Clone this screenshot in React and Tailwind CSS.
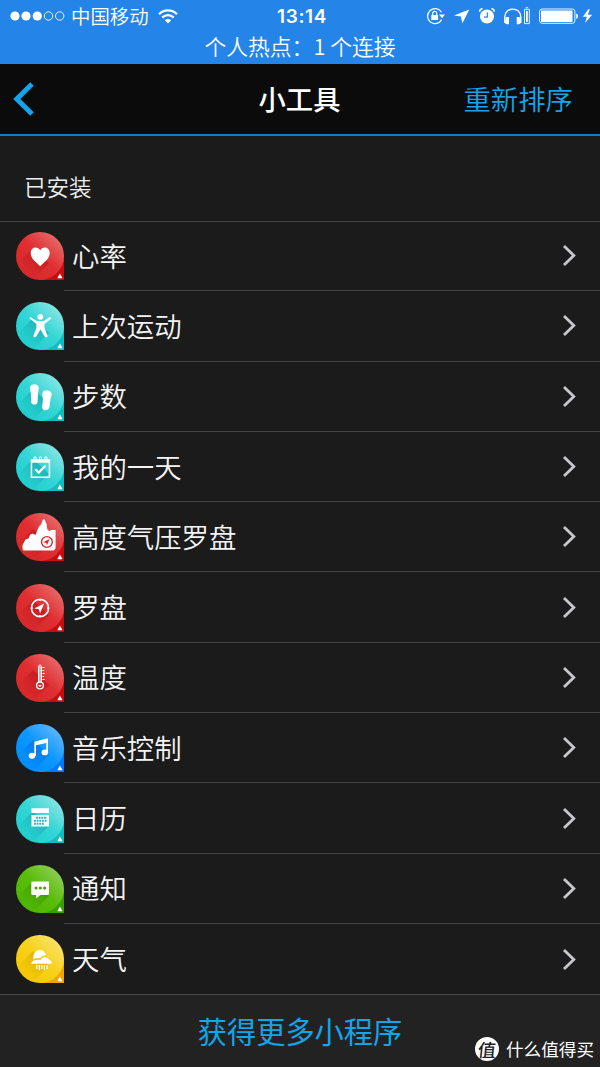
import React from "react";

const TONES = {
  red: { from: "#d9292b", mid: "#df2f31", to: "#e86667", corner: "#c80d12", shade: "#b00f14" },
  teal: { from: "#22d0d0", mid: "#35d6d6", to: "#84e4e2", corner: "#12bdbd", shade: "#0a9a9f" },
  blue: { from: "#0090ff", mid: "#0e97ff", to: "#5ab4ff", corner: "#0078ff", shade: "#0062d6" },
  green: { from: "#4fb800", mid: "#5bbd0c", to: "#8bcd52", corner: "#3aa000", shade: "#2f8500" },
  yellow: { from: "#f5cb00", mid: "#f6d21c", to: "#f9e268", corner: "#f0a500", shade: "#cf9a00" },
};

const Needle = ({ x, y, s = 1 }) => (
  <path transform={`translate(${x} ${y}) scale(${s})`} d="M4.8-4.9-6 .5-1 1.2.4 5.6Z" />
);

const GLYPHS = {
  heart: <path d="M24.2 34.2C21 30.8 14.7 27 14.7 21c0-5.8 6.800-7.300 9.500-2.600 2.700-4.700 9.500-3.200 9.500 2.600 0 6-6.300 9.800-9.500 13.200Z" />,
  person: (
    <g>
      <circle cx="24.300" cy="14.800" r="2.900" />
      <path d="M13.300 16.200c.3-1.200 1.400-1.200 2.300-.5l5.400 3.200h6.800l5.300-3.300c1-.6 2.200-.1 2.300.8l-6.900 5.500v3.800l3 8c.3 1.500-2 2.300-2.900.9l-4.200-7.200-4.200 7.200c-.9 1.200-3.100.7-2.800-.9l3-8v-3.800Z" />
    </g>
  ),
  steps: (
    <g>
      <path d="M14 14.500c.5-3.700 6.500-4.300 8.400-1 1 2-.2 4.600-.4 6.700l-.4 8.200c0 4-5.900 4.300-6.500.5l-.2-7.900c-.1-2.500-1.300-4.500-.9-6.500Z" />
      <path d="M26.500 19.700c1-3.500 7.600-3 9 .4.700 2.200-.9 4.700-1.200 7.200L33.600 34c-1.300 4.500-7.200 4-7.500.4l.8-7.700c.1-2.800-1-5-.4-7Z" />
    </g>
  ),
  day: (
    <g>
      <path fillRule="evenodd" d="M14.700 16.200h19.500v18.700H14.700Zm1.500 3.600v13.600h16.500V19.800Z" />
      <g fill="none" stroke="#fff" strokeWidth="1"><path d="M18 18v-4h2v4M23.400 18v-4h2v4M28.800 18v-4h2v4" /></g>
      <path d="m19.200 26.200 3.500 3.400 6.800-6.900" fill="none" stroke="#fff" strokeWidth="2.200" />
    </g>
  ),
  mountain: (
    <g>
      <path d="M6.500 35.500v-3.300l3-5.700 3.300-1.200 1.200-3.600 2.600-1.200 2.800 1.500 3.500-8.200 2-2 2.200-5.500 1.300-.2 2.200 5.200.7 5 2.200 2 1.500-1.200h4.600V34c0 2.600-1.300 3.600-3.600 3.600H9c-1.800 0-2.500-.8-2.500-2.100Z" />
      <circle cx="30.900" cy="29" r="5.400" fill="#fff" stroke="#d9292b" strokeWidth="1.400" />
      <g fill="#d9292b"><Needle x={30.7} y={29} s={0.6} /></g>
    </g>
  ),
  compass: (
    <g>
      <circle cx="24" cy="24" r="8.600" fill="none" stroke="#fff" strokeWidth="1.600" />
      <path d="M24 15v2M24 31v2M15 24h2M31 24h2" stroke="#fff" strokeWidth="1.600" />
      <Needle x={23.700} y={24.100} s={0.92} />
    </g>
  ),
  temp: (
    <g fill="none" stroke="#fff">
      <path d="M22.500 28.200V12.600c0-2 3-2 3 0v15.600" strokeWidth="1" />
      <path d="M24 12v16" strokeWidth="1.800" strokeOpacity=".65" />
      <circle cx="24" cy="31.500" r="3.400" strokeWidth="1.400" />
      <path d="M22.600 31.300h2.800l-1.400 1.700Z" fill="#fff" strokeWidth=".6" />
      <path d="M26.500 13.500h2.200M26.500 16.500h1.700M26.500 19.500h2.200M26.500 22.500h1.700M26.500 25.500h2.200" strokeWidth="1" />
    </g>
  ),
  music: (
    <g>
      <path d="M18.300 17.800 32 14.200v14.500h-1.700V18.900l-10.300 2.400V32h-1.700Z" />
      <ellipse cx="16" cy="31.800" rx="3.300" ry="3" />
      <ellipse cx="28.800" cy="28.400" rx="3.300" ry="2.900" />
    </g>
  ),
  calendar: (
    <g>
      <path d="M15.500 13.200H33v4.900H15.500ZM15.500 19.900H33v11.500H15.500Z" />
      <path d="M20 22.700h11M18 25.700h13M18 28.700h10" stroke="#29b6ba" strokeWidth="1.900" strokeDasharray="1.900 .75" />
    </g>
  ),
  message: (
    <g>
      <path d="M16.500 16.500h15.300c.8 0 1.200.4 1.200 1.200v11c0 .8-.4 1.200-1.200 1.200h-7.500l-4.100 3.500v-3.500h-3.700c-.8 0-1.200-.4-1.200-1.200v-11c0-.8.4-1.200 1.200-1.200Z" />
      <g fill="#42a000"><circle cx="20" cy="23" r="1.500" /><circle cx="24.300" cy="23" r="1.500" /><circle cx="28.600" cy="23" r="1.500" /></g>
    </g>
  ),
  weather: (
    <g>
      <path d="M17.600 24.500c-1.300-5.500 2.400-9.900 6.800-9.600 2.900.2 5.300 2.600 5.600 5.500-2.700-.3-4.700.9-5.800 3-3-.6-5.200-.1-6.600 1.100Z" />
      <path d="M15.400 28.800c0-2.800 3.400-4.200 9-3.900 1.300-2 3.400-3.100 5.600-2.500 2.800.7 4 3 5.500 4.200.8.900.4 2.200-.8 2.200Z" />
      <path d="M20.800 30v4M23.400 30v5.200M25.900 30v4M28.400 30v5.200M31 30v4" stroke="#fff" strokeWidth="1.300" />
    </g>
  ),
};

const ITEMS = [
  ["心率", "red", "heart"],
  ["上次运动", "teal", "person"],
  ["步数", "teal", "steps"],
  ["我的一天", "teal", "day"],
  ["高度气压罗盘", "red", "mountain"],
  ["罗盘", "red", "compass"],
  ["温度", "red", "temp"],
  ["音乐控制", "blue", "music"],
  ["日历", "teal", "calendar"],
  ["通知", "green", "message"],
  ["天气", "yellow", "weather"],
];

function WidgetIcon({ tone, glyph }) {
  const t = TONES[tone];
  const id = `${tone}-${glyph}`;
  return (
    <svg className="h-12 w-12 shrink-0" viewBox="0 0 48 48" fill="#fff">
      <defs>
        <linearGradient id={`${id}-g`} x1="0.2" y1="0.85" x2="0.86" y2="0.14">
          <stop offset="0" stopColor={t.from} />
          <stop offset=".5" stopColor={t.mid} />
          <stop offset="1" stopColor={t.to} />
        </linearGradient>
        <linearGradient id={`${id}-s`} gradientUnits="userSpaceOnUse" x1="27" y1="21" x2="10" y2="38">
          <stop offset="0" stopColor={t.shade} stopOpacity=".6" />
          <stop offset="1" stopColor={t.shade} stopOpacity=".04" />
        </linearGradient>
        <clipPath id={`${id}-c`}><circle cx="24" cy="24" r="24" /></clipPath>
      </defs>
      <path d="M24 24h24v24H24Z" fill={t.corner} />
      <circle cx="24" cy="24" r="24" fill={`url(#${id}-g)`} />
      <path clipPath={`url(#${id}-c)`} d="M17 16 0 33v15h16l17-17Z" fill={`url(#${id}-s)`} />
      {GLYPHS[glyph]}
      <path d="m43.900 41.600 2.300 3.800v.9h-4.600v-.9Z" />
    </svg>
  );
}

function StatusBar() {
  return (
    <div className="h-16 bg-[#2584e8] text-white">
      <div className="grid h-8 grid-cols-[1fr_auto_1fr] items-center pl-[10px] pr-[7px]">
        <div className="flex items-center">
          <svg className="h-[10px] w-[55px]" viewBox="0 0 55 10" fill="#fff">
            <circle cx="5" cy="5" r="4.600" /><circle cx="16" cy="5" r="4.600" /><circle cx="27.300" cy="5" r="4.600" />
            <g fill="none" stroke="#fff" strokeWidth=".9"><circle cx="38.500" cy="5" r="4.200" /><circle cx="49.700" cy="5" r="4.200" /></g>
          </svg>
          <span className="ml-[6px] text-[19.400px] leading-8 font-[350]">中国移动</span>
          <svg className="ml-[9px] h-[15px] w-5" viewBox="0 0 20 15" fill="none" stroke="#fff" strokeWidth="2.200">
            <path d="M1 5.200C6.200.2 13.800.2 19 5.200M4.200 8.600c3.400-3.200 8.200-3.200 11.600 0" />
            <path d="M6.800 11.300c1.800-1.700 4.600-1.700 6.400 0L10 14.600Z" fill="#fff" stroke="none" />
          </svg>
        </div>
        <span className="pt-[2px] pl-[1px] text-[19px] leading-[30px] font-semibold tracking-[0.6px] [font-family:Inter,sans-serif]">13:14</span>
        <svg className="h-5 w-[168px] justify-self-end" viewBox="425 6 168 20" fill="#fff">
          <g fill="none" stroke="#fff" strokeWidth="1.200">
            <path d="M441.500 12.200a7.500 7.500 0 1 0 .2 7.400" />
            <path d="M432.700 15.500v-2.200a2 2 0 0 1 4 0v2.200" />
          </g>
          <path d="M431.300 15h6.800v5h-6.800ZM439 14.400h6l-3 3.800Z" />
          <path d="m469.300 9.400-15.300 6 7 1.200 1.300 7Z" />
          <circle cx="487" cy="16.500" r="7" />
          <path d="M479.700 11.800c0-1.700 1.200-3 2.900-3M494.300 11.800c0-1.700-1.200-3-2.900-3" fill="none" stroke="#fff" strokeWidth="1.500" />
          <path d="M487.300 12.500v4.600H484" fill="none" stroke="#2584e8" strokeWidth="1.200" />
          <path d="M504.800 23v-6c0-10.500 16-10.500 16 0v6" fill="none" stroke="#fff" strokeWidth="1.400" />
          <path d="M506 17h3v7.200h-2c-1.200 0-2-.8-2-2ZM519.700 17h-3v7.200h2c1.200 0 2-.8 2-2Z" />
          <path d="M524.500 9.300h4.800v14.300h-4.800ZM525.700 7.700h2.400" fill="none" stroke="#fff" strokeWidth=".9" />
          <path d="M526 11h1.800v11H526Z" />
          <rect x="539.600" y="9" width="35.300" height="14.300" rx="2.500" fill="none" stroke="#fff" strokeWidth=".9" />
          <path d="M541 10.500h31.500v11.400H541ZM576.200 13.500c2.500.6 2.500 4.800 0 5.500Z" />
          <path d="m588.300 9.300-5.500 7.500h4.100l-2 6.500 7.200-8.500h-4.300l2-5.500Z" />
        </svg>
      </div>
      <div className="-mt-[1px] text-center text-[21.800px] leading-[30px] font-[350]">
        个人热点：1 个连接
      </div>
    </div>
  );
}

export default function App() {
  return (
    <div className="flex h-[1067px] w-[600px] flex-col overflow-hidden bg-[#1b1b1b] [font-family:'Noto_Sans_CJK_SC',sans-serif]">
      <StatusBar />
      <header className="grid h-[72px] grid-cols-[1fr_auto_1fr] items-center border-b-2 border-[#1480b4] bg-[#0b0b0b] px-[13px]">
        <svg className="h-[34px] w-[21px]" viewBox="0 0 21 34" fill="none" stroke="#12a5ec" strokeWidth="5">
          <path d="M19 2 3.800 17 19 32" />
        </svg>
        <h1 className="-mt-[2px] pr-px text-[27.300px] font-medium text-white">小工具</h1>
        <span className="-mt-px mr-[14px] justify-self-end text-[27.400px] font-[350] text-[#12a5ec]">重新排序</span>
      </header>
      <h2 className="h-[85px] shrink-0 pt-[34px] pl-6 text-[22.500px] leading-[33px] font-[350] text-[#eee]">已安装</h2>
      <ul className="shrink-0 bg-[linear-gradient(#444,#444)] bg-[length:100%_1px] bg-no-repeat">
        {ITEMS.map(([label, tone, glyph], i) => (
          <li key={label} className="flex h-[70.300px] items-center pl-4">
            <WidgetIcon tone={tone} glyph={glyph} />
            <div className={`flex h-full flex-1 items-center justify-between pr-6 pl-2 ${i < ITEMS.length - 1 ? "border-b border-[#444]" : ""}`}>
              <span className="-mt-[2px] text-[27.400px] leading-10 font-[350] text-[#f4f4f4]">{label}</span>
              <svg className="h-[21px] w-[13px]" viewBox="0 0 13 21" fill="none" stroke="#c8c8cc" strokeWidth="2.800">
                <path d="m1 1 9.800 9.500L1 20" />
              </svg>
            </div>
          </li>
        ))}
      </ul>
      <footer className="relative flex-1 border-t border-[#484848] bg-[#222]">
        <div className="pt-[14px] text-center text-[29.200px] leading-[43px] text-[#12a5ec]">获得更多小程序</div>
        <div className="absolute right-[6px] bottom-[6px] flex items-center gap-[7px] text-white">
          <span className="flex size-6 items-center justify-center rounded-full bg-white text-[18px] leading-6 font-medium text-[#222]">
            <span className="-skew-x-6">值</span>
          </span>
          <span className="text-[17.600px] leading-6">什么值得买</span>
        </div>
      </footer>
    </div>
  );
}
